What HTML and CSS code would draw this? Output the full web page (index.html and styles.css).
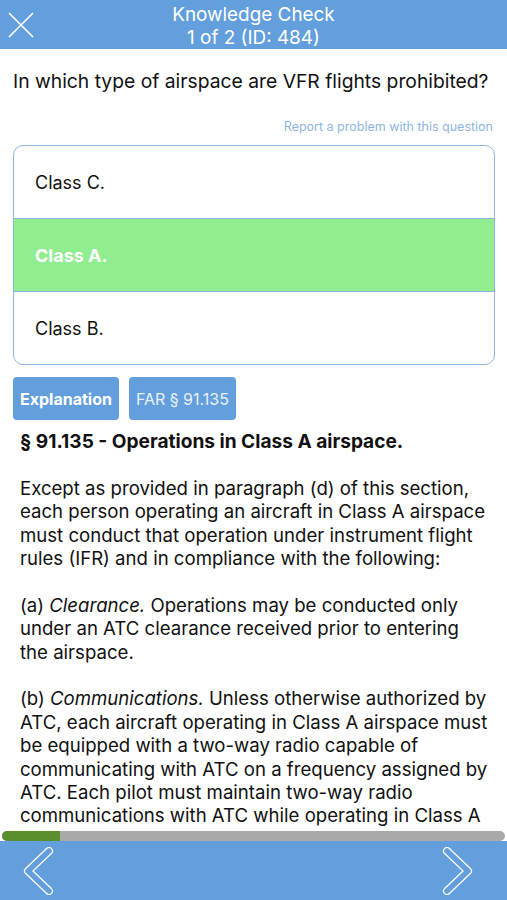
FILE: index.html
```html
<!DOCTYPE html>
<html>
<head>
<meta charset="utf-8">
<link rel="stylesheet" href="styles.css">
</head>
<body>
<div class="app">
  <header class="topbar">
    <svg class="close" width="28" height="28" viewBox="0 0 28 28"><path d="M2 2 L26 26 M26 2 L2 26" stroke="#fff" stroke-width="1.6" fill="none"/></svg>
    <div class="title">Knowledge Check<br>1 of 2 (ID: 484)</div>
  </header>
  <main class="content">
    <p class="question">In which type of airspace are VFR flights prohibited?</p>
    <div class="report">Report a problem with this question</div>
    <div class="answers">
      <div class="answer">Class C.</div>
      <div class="answer correct">Class A.</div>
      <div class="answer">Class B.</div>
    </div>
    <div class="tabs">
      <div class="tab active">Explanation</div>
      <div class="tab">FAR § 91.135</div>
    </div>
    <div class="reg">
      <h2>§ 91.135 - Operations in Class A airspace.</h2>
      <p>Except as provided in paragraph (d) of this section, each person operating an aircraft in Class A airspace must conduct that operation under instrument flight rules (IFR) and in compliance with the following:</p>
      <p>(a) <i>Clearance.</i> Operations may be conducted only under an ATC clearance received prior to entering the airspace.</p>
      <p>(b) <i>Communications.</i> Unless otherwise authorized by ATC, each aircraft operating in Class A airspace must be equipped with a two-way radio capable of communicating with ATC on a frequency assigned by ATC. Each pilot must maintain two-way radio communications with ATC while operating in Class A airspace.</p>
    </div>
  </main>
  <div class="progress"><div class="fill" style="width: 58px"></div></div>
  <footer class="bottombar">
    <svg class="chev" width="36" height="48" viewBox="0 0 36 48"><path d="M27 4 L6 24 L27 44" stroke="#fff" stroke-width="8" stroke-linecap="round" stroke-linejoin="round" fill="none"/><path d="M27 4 L6 24 L27 44" stroke="#629fdc" stroke-width="5.6" stroke-linecap="round" stroke-linejoin="round" fill="none"/></svg>
    <svg class="chev" width="36" height="48" viewBox="0 0 36 48"><path d="M9 4 L30 24 L9 44" stroke="#fff" stroke-width="8" stroke-linecap="round" stroke-linejoin="round" fill="none"/><path d="M9 4 L30 24 L9 44" stroke="#629fdc" stroke-width="5.6" stroke-linecap="round" stroke-linejoin="round" fill="none"/></svg>
  </footer>
</div>
</body>
</html>
```
FILE: styles.css
```css
* { box-sizing: border-box; }
html, body { margin: 0; padding: 0; }
body {
  font-family: Inter, Roboto, "Liberation Sans", sans-serif;
  color: #111;
  background: #fff;
}
.app {
  width: 507px;
  height: 900px;
  display: flex;
  flex-direction: column;
  overflow: hidden;
}
.topbar {
  height: 49px;
  flex: none;
  background: #629fdc;
  position: relative;
  display: flex;
  align-items: center;
  justify-content: center;
}
.close {
  position: absolute;
  left: 7px;
  top: 11px;
}
.title {
  color: #fff;
  font-size: 18.9px;
  line-height: 23px;
  text-align: center;
  padding-top: 2px;
}
.content {
  flex: 1;
  overflow: hidden;
  padding: 0 13px;
}
.question {
  margin: 0;
  padding-top: 20px;
  font-size: 19.3px;
  line-height: 24px;
  white-space: nowrap;
}
.report {
  margin-top: 26px;
  text-align: right;
  font-size: 12.5px;
  line-height: 16px;
  color: #8db6e4;
  padding-right: 1px;
}
.answers {
  margin-top: 10px;
  border: 1px solid #8db6e4;
  border-radius: 10px;
  overflow: hidden;
  width: 482px;
}
.answer {
  height: 73px;
  display: flex;
  align-items: center;
  padding-left: 21px;
  font-size: 18px;
  border-top: 1px solid #8db6e4;
}
.answer:first-child { border-top: none; height: 72px; }
.answer.correct {
  background: #90ed90;
  color: #fff;
  font-weight: 700;
}
.tabs {
  display: flex;
  gap: 10px;
  margin-top: 12px;
}
.tab {
  height: 43px;
  padding: 0 7px;
  display: flex;
  align-items: center;
  background: #629fdc;
  color: #e8f1fb;
  border-radius: 4px;
  font-size: 16px;
}
.tab.active { font-weight: 700; color: #fff; }
.reg {
  padding: 0 4px 0 7px;
  font-size: 18.6px;
  line-height: 23.4px;
}
.reg h2 {
  margin: 10px 0 0;
  font-size: 19.1px;
  line-height: 23.4px;
  font-weight: 700;
}
.reg p { margin: 23.4px 0 0; }
.progress {
  flex: none;
  height: 10px;
  margin: 0 2px;
  background: #a9a9a9;
  border-radius: 5px;
  overflow: hidden;
}
.fill {
  height: 100%;
  background: #5b8e2d;
}
.bottombar {
  flex: none;
  height: 59px;
  background: #629fdc;
  display: flex;
  justify-content: space-between;
  align-items: center;
  padding: 0 33px 0 22px;
}
```
